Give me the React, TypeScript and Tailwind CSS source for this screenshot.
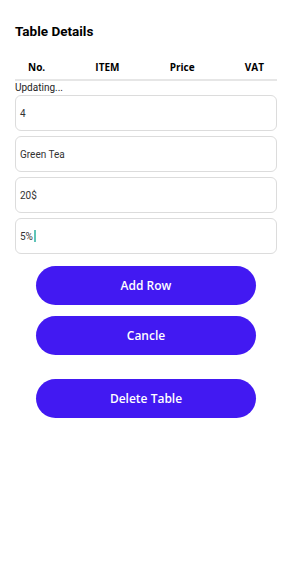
import React from "react";

const Field = ({ children }: { children: React.ReactNode }) => (
  <div className="h-[36px] w-full rounded-[6px] border border-[#dcdcdc] bg-white px-[4px] flex items-center text-[10px] text-[#333] font-['Roboto',sans-serif]">
    {children}
  </div>
);

const Btn = ({ label }: { label: string }) => (
  <button className="h-[39px] w-[220px] rounded-full bg-[#4219f2] text-white text-[12px] font-semibold font-['Open_Sans',sans-serif]">
    {label}
  </button>
);

export default function App() {
  return (
    <div className="w-[292px] h-[573px] bg-white px-[15px] font-['Roboto',sans-serif]">
      <h1 className="pt-[22px] text-[13.5px] font-bold text-black leading-[18px]">Table Details</h1>
      <div className="mt-[21px] flex justify-between px-[13px] text-[10px] font-bold text-black leading-[12px] font-['Open_Sans',sans-serif]">
        <span>No.</span>
        <span>ITEM</span>
        <span>Price</span>
        <span>VAT</span>
      </div>
      <div className="mt-[6px] h-[2px] bg-[#e6e6e6]"></div>
      <div className="text-[10px] text-[#222] leading-[13px]">Updating...</div>
      <div className="mt-[1px] flex flex-col gap-[5px]">
        <Field>4</Field>
        <Field>Green Tea</Field>
        <Field>20$</Field>
        <Field>
          <span>5%</span>
          <span className="ml-[1px] inline-block w-[2px] h-[12px] bg-[#5fc4b8]"></span>
        </Field>
      </div>
      <div className="mt-[12px] flex flex-col items-center">
        <Btn label="Add Row" />
        <div className="h-[11px]"></div>
        <Btn label="Cancle" />
        <div className="h-[24px]"></div>
        <Btn label="Delete Table" />
      </div>
    </div>
  );
}
